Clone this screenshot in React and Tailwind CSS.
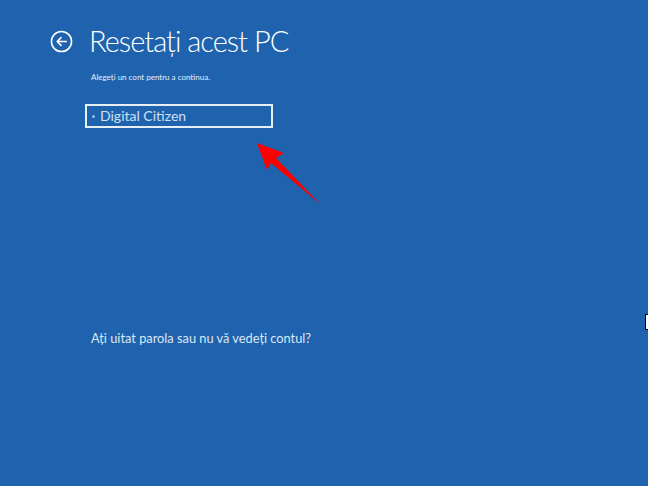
import React from "react";

const font = { fontFamily: 'Lato, "Open Sans", "Noto Sans", sans-serif' };

export default function App() {
  return (
    <div className="relative w-[648px] h-[486px] overflow-hidden bg-[#1f63ae] text-white" style={font}>
      <div className="flex flex-col pl-[50px] pt-[22px]">
        {/* header */}
        <div className="flex items-center gap-[16px]">
          <svg width="23" height="23" viewBox="0 0 24 24" fill="none" stroke="white" strokeWidth="1.6">
            <circle cx="12" cy="12" r="10.5" />
            <path d="M17 12H7.5M11.5 8l-4 4 4 4" strokeLinecap="round" strokeLinejoin="round" />
          </svg>
          <h1 className="text-[29px] font-light leading-[38px] tracking-[-1px]">Resetați acest PC</h1>
        </div>

        <div className="pl-[41px] mt-[11px] text-[8px] leading-[12px] text-[#e6eef8]">
          Alegeți un cont pentru a continua.
        </div>

        {/* account */}
        <div className="ml-[35px] mt-[21px] w-[188px] h-[24px] border-2 border-[#e8eef7] flex items-center pl-[5px] gap-[5px]">
          <span className="w-[3px] h-[3px] rounded-full bg-[#8cc4f0]" />
          <span className="text-[14px] leading-none text-[#cfe0f2]">Digital Citizen</span>
        </div>

        <div className="pl-[41px] mt-[201px] text-[12.8px] leading-[18px] text-[#dbe7f4]">
          Ați uitat parola sau nu vă vedeți contul?
        </div>
      </div>

      {/* red annotation arrow */}
      <svg className="absolute left-0 top-0" width="648" height="486" viewBox="0 0 648 486">
        <polygon points="257,143 284,153 276,158 320,204 271,163 267,170" fill="#ff0000" />
      </svg>

      {/* mouse cursor at right edge */}
      <div className="absolute left-[645px] top-[314px] w-[4px] h-[16px] bg-white border-l border-y border-black" />
    </div>
  );
}
